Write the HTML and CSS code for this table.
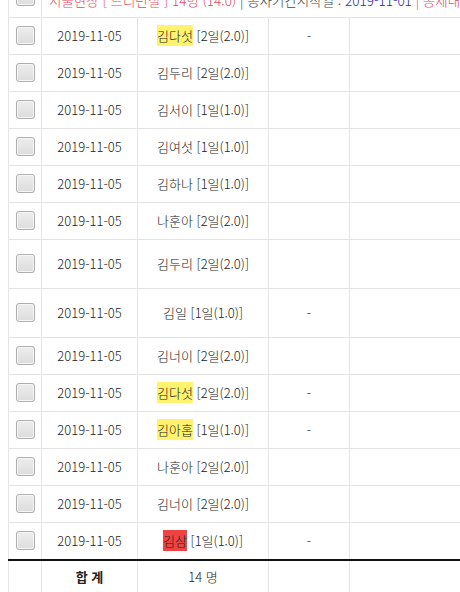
FILE: index.html
```html
<!DOCTYPE html>
<html lang="ko">
<head>
    <meta charset="UTF-8">
    <meta name="viewport" content="width=device-width, initial-scale=1.0">
    <title>근무 내역</title>
    <link rel="stylesheet" href="styles.css">
</head>
<body>
    <div class="list-wrap">
        <table class="list">
            <colgroup>
                <col class="c-chk">
                <col class="c-date">
                <col class="c-name">
                <col class="c-mark">
                <col class="c-etc">
            </colgroup>
            <tr class="site-row">
                <td><input type="checkbox" class="chk"></td>
                <td colspan="4" class="site-info">
                    <span class="red">서울현장 [ 드리런절 ] 14명 (14.0)</span>
                    <span class="gray">| 공사기간시작일 :</span>
                    <span class="blue">2019-11-01</span>
                    <span class="red">| 공제대상기간 : 2019-11-01 ~ 2019-11-30</span>
                </td>
            </tr>
            <tr>
                <td><input type="checkbox" class="chk"></td>
                <td>2019-11-05</td>
                <td><mark class="hl-yellow">김다섯</mark> [2일(2.0)]</td>
                <td>-</td>
                <td></td>
            </tr>
            <tr>
                <td><input type="checkbox" class="chk"></td>
                <td>2019-11-05</td>
                <td>김두리 [2일(2.0)]</td>
                <td></td>
                <td></td>
            </tr>
            <tr>
                <td><input type="checkbox" class="chk"></td>
                <td>2019-11-05</td>
                <td>김서이 [1일(1.0)]</td>
                <td></td>
                <td></td>
            </tr>
            <tr>
                <td><input type="checkbox" class="chk"></td>
                <td>2019-11-05</td>
                <td>김여섯 [1일(1.0)]</td>
                <td></td>
                <td></td>
            </tr>
            <tr>
                <td><input type="checkbox" class="chk"></td>
                <td>2019-11-05</td>
                <td>김하나 [1일(1.0)]</td>
                <td></td>
                <td></td>
            </tr>
            <tr>
                <td><input type="checkbox" class="chk"></td>
                <td>2019-11-05</td>
                <td>나훈아 [2일(2.0)]</td>
                <td></td>
                <td></td>
            </tr>
            <tr class="tall">
                <td><input type="checkbox" class="chk"></td>
                <td>2019-11-05</td>
                <td>김두리 [2일(2.0)]</td>
                <td></td>
                <td></td>
            </tr>
            <tr class="tall">
                <td><input type="checkbox" class="chk"></td>
                <td>2019-11-05</td>
                <td>김일 [1일(1.0)]</td>
                <td>-</td>
                <td></td>
            </tr>
            <tr>
                <td><input type="checkbox" class="chk"></td>
                <td>2019-11-05</td>
                <td>김너이 [2일(2.0)]</td>
                <td></td>
                <td></td>
            </tr>
            <tr>
                <td><input type="checkbox" class="chk"></td>
                <td>2019-11-05</td>
                <td><mark class="hl-yellow">김다섯</mark> [2일(2.0)]</td>
                <td>-</td>
                <td></td>
            </tr>
            <tr>
                <td><input type="checkbox" class="chk"></td>
                <td>2019-11-05</td>
                <td><mark class="hl-yellow">김아홉</mark> [1일(1.0)]</td>
                <td>-</td>
                <td></td>
            </tr>
            <tr>
                <td><input type="checkbox" class="chk"></td>
                <td>2019-11-05</td>
                <td>나훈아 [2일(2.0)]</td>
                <td></td>
                <td></td>
            </tr>
            <tr>
                <td><input type="checkbox" class="chk"></td>
                <td>2019-11-05</td>
                <td>김너이 [2일(2.0)]</td>
                <td></td>
                <td></td>
            </tr>
            <tr class="last">
                <td><input type="checkbox" class="chk"></td>
                <td>2019-11-05</td>
                <td><mark class="hl-red">김삼</mark> [1일(1.0)]</td>
                <td>-</td>
                <td></td>
            </tr>
            <tr class="total">
                <td></td>
                <td class="total-label">합 계</td>
                <td>14 명</td>
                <td></td>
                <td></td>
            </tr>
        </table>
    </div>
</body>
</html>
```

FILE: styles.css
```css
html{
    box-sizing: border-box;
    font-family: 'Noto Sans CJK KR', 'Noto Sans', sans-serif;
    font-size: 13px;
    font-weight: 300;
}

*,
*:after,
*:before{
    box-sizing: inherit;
}

body{
    margin: 0;
    overflow: hidden;
    color: #222;
    background: #fff;
}

.list-wrap{
    margin-top: -24px;
    padding-left: 8px;
    width: 100%;
    overflow: hidden;
}

.list{
    width: 720px;
    border-collapse: collapse;
    table-layout: fixed;
}

.c-chk{ width: 33px; }
.c-date{ width: 96px; }
.c-name{ width: 131px; }
.c-mark{ width: 81px; }

.list td{
    height: 37px;
    padding: 0;
    border: 1px solid #e4e4e4;
    text-align: center;
    vertical-align: middle;
    line-height: 15px;
    white-space: nowrap;
}

.list tr.tall td{
    height: 49px;
}

.list tr.last td{
    height: 38px;
}

.list tr.site-row td{
    height: 41px;
    border-top: none;
}

.list td.site-info{
    text-align: left;
    vertical-align: bottom;
    padding: 0 0 9px 7px;
    overflow: hidden;
    font-size: 13.5px;
}

.red{ color: #e8475c; }
.gray{ color: #444; }
.blue{ color: #2323c8; }

.chk{
    -webkit-appearance: none;
    appearance: none;
    display: block;
    margin: 0 auto;
    width: 19px;
    height: 19px;
    border: 1px solid #aeaeae;
    border-radius: 3px;
    background: linear-gradient(#ededed, #dcdcdc);
    box-shadow: inset 0 0 0 1px #f6f6f6;
}

mark{
    color: #222;
    padding: 1px 0;
}

.hl-yellow{
    background: #fff36e;
}

.hl-red{
    background: #ee4343;
}

.list tr.total td{
    border-top: 2px solid #111;
    height: 33px;
}

.total-label{
    font-weight: bold;
}
```
